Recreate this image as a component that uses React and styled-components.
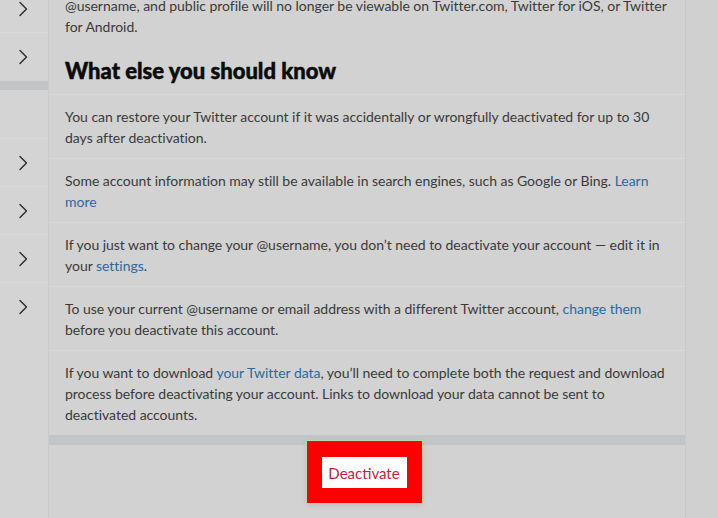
import React from "react";
import styled, { createGlobalStyle } from "styled-components";

const Global = createGlobalStyle`
  html, body { margin: 0; padding: 0; }
  body {
    background: #d0d0d0;
    font-family: Lato, "Noto Sans", sans-serif;
    overflow: hidden;
  }
`;

const Page = styled.div`
  display: flex;
  height: 518px;
  overflow: hidden;
`;

const Sidebar = styled.nav`
  width: 48px;
  flex: none;
  display: flex;
  flex-direction: column;
  margin-top: -15px;
  background: #d4d4d4;
  border-right: 1px solid #c9c9c9;
`;

const NavRow = styled.div`
  height: 48px;
  box-sizing: border-box;
  display: flex;
  align-items: center;
  padding-left: 18px;
  border-bottom: ${(p) => (p.$last ? "none" : "1px solid #dadada")};
`;

const NavSpacer = styled.div`
  height: 49px;
  box-sizing: border-box;
  border-bottom: 1px solid #dadada;
`;

const Band = styled.div`
  height: ${(p) => p.$h}px;
  background: #c2c5c8;
  flex: none;
`;

const Main = styled.main`
  width: 636px;
  flex: none;
  display: flex;
  flex-direction: column;
  background: #d2d2d2;
  border-right: 1px solid #c9c9c9;
`;

const Rest = styled.div`
  flex: 1;
  background: #d0d0d0;
`;

const Text = styled.p`
  margin: 0;
  font-size: 14px;
  line-height: 21px;
  letter-spacing: -0.03px;
  color: #3a3a3a;
`;

const Intro = styled(Text)`
  margin-top: -5px;
  padding: 0 12px 0 16px;
`;

const Heading = styled.h2`
  margin: 0;
  padding: 22px 16px 11px;
  font-size: 22px;
  line-height: 24px;
  font-weight: 900;
  color: #0c0c0c;
  -webkit-text-stroke: 0.5px #0c0c0c;
`;

const InfoRow = styled(Text)`
  padding: 11px 12px 10px 16px;
  border-top: 1px solid #d9d9d9;
`;

const Link = styled.a`
  color: #2d689c;
  text-decoration: none;
`;

const Footer = styled.div`
  display: flex;
  justify-content: center;
  padding-right: 6px;
`;

const Deactivate = styled.button`
  margin-top: -4px;
  width: 115px;
  height: 62px;
  border: 15px solid #ff0000;
  border-top-width: 16px;
  outline: 1px solid #b9dcae;
  box-shadow: 0 2px 6px rgba(0, 0, 0, 0.12);
  background: #ffffff;
  color: #c4213f;
  font-family: Lato, "Noto Sans", sans-serif;
  font-size: 15px;
  padding: 0;
  box-sizing: border-box;
  cursor: pointer;
`;

const Chevron = () => (
  <svg width="10" height="16" viewBox="0 0 10 16" fill="none">
    <path d="M2 1.5 L8.5 8 L2 14.5" stroke="#2b2b2b" strokeWidth="1.4" strokeLinecap="round" strokeLinejoin="round" />
  </svg>
);

export default function App() {
  return (
    <>
      <Global />
      <Page>
        <Sidebar>
          <NavRow><Chevron /></NavRow>
          <NavRow $last><Chevron /></NavRow>
          <Band $h={9} />
          <NavSpacer />
          <NavRow><Chevron /></NavRow>
          <NavRow><Chevron /></NavRow>
          <NavRow><Chevron /></NavRow>
          <NavRow $last><Chevron /></NavRow>
        </Sidebar>
        <Main>
          <Intro>
            @username, and public profile will no longer be viewable on Twitter.com, Twitter for iOS, or Twitter
            for Android.
          </Intro>
          <Heading>What else you should know</Heading>
          <InfoRow>
            You can restore your Twitter account if it was accidentally or wrongfully deactivated for up to 30
            days after deactivation.
          </InfoRow>
          <InfoRow>
            Some account information may still be available in search engines, such as Google or Bing.{" "}
            <Link href="#">Learn more</Link>
          </InfoRow>
          <InfoRow>
            If you just want to change your @username, you don’t need to deactivate your account — edit it in
            your <Link href="#">settings</Link>.
          </InfoRow>
          <InfoRow>
            To use your current @username or email address with a different Twitter account,{" "}
            <Link href="#">change them</Link> before you deactivate this account.
          </InfoRow>
          <InfoRow>
            If you want to download <Link href="#">your Twitter data</Link>, you’ll need to complete both the
            request and download process before deactivating your account. Links to download your data cannot
            be sent to deactivated accounts.
          </InfoRow>
          <Band $h={10} />
          <Footer>
            <Deactivate>Deactivate</Deactivate>
          </Footer>
        </Main>
        <Rest />
      </Page>
    </>
  );
}
